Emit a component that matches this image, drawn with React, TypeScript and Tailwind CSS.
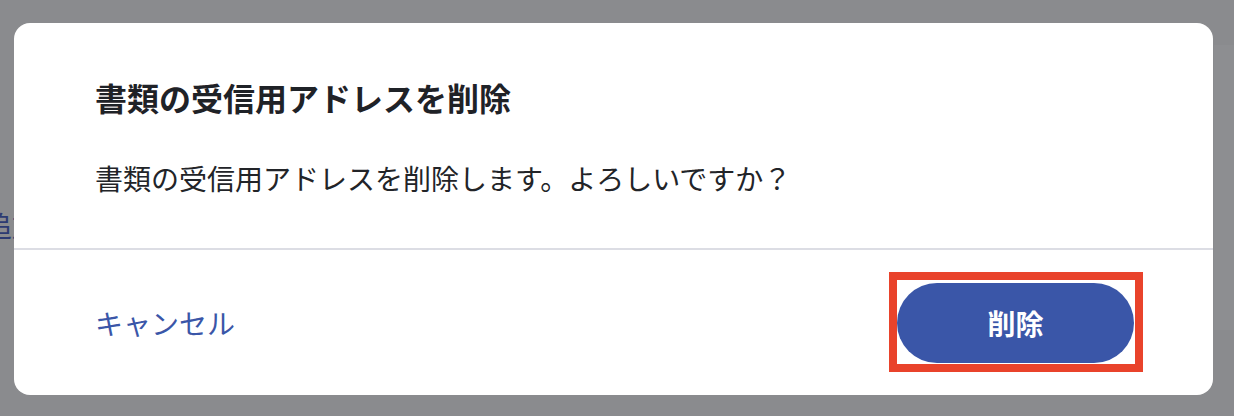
export default function App() {
  return (
    <div
      className="relative h-[416px] w-[1234px] overflow-hidden bg-[#8a8b8e]"
      style={{ fontFamily: '"Noto Sans CJK JP", "Noto Sans", sans-serif' }}
    >
      {/* page behind the overlay */}
      <div className="absolute left-[-16px] top-[205px] text-[28px] leading-[40px] text-[#2c3a72]">
        追加
      </div>
      <div className="absolute right-0 top-[45px] h-[285px] w-[20px] bg-[#8d8e91]" />

      <div className="absolute left-[14px] top-[23px] flex h-[372px] w-[1199px] flex-col rounded-[16px] bg-white">
        <div className="flex flex-col gap-[36px] px-[81px] pb-[49px] pt-[50px]">
          <h2 className="text-[32px] font-bold leading-[48px] text-[#1f2227]">
            書類の受信用アドレスを削除
          </h2>
          <p className="text-[28px] leading-[42px] text-[#222428]">
            書類の受信用アドレスを削除します。よろしいですか？
          </p>
        </div>
        <div className="h-[2px] bg-[#dcdde4]" />
        <div className="flex flex-1 items-center justify-between pl-[81px] pr-[79px]">
          <button className="text-[28px] leading-[40px] text-[#3a56a8]">キャンセル</button>
          <div className="relative">
            <button className="h-[80px] w-[237px] rounded-full bg-[#3a56a8] text-[28px] font-bold text-white">
              削除
            </button>
            <span className="pointer-events-none absolute bottom-[-9px] left-[-8px] right-[-9px] top-[-11px] border-[8px] border-[#e9432b]" />
          </div>
        </div>
      </div>
    </div>
  );
}
